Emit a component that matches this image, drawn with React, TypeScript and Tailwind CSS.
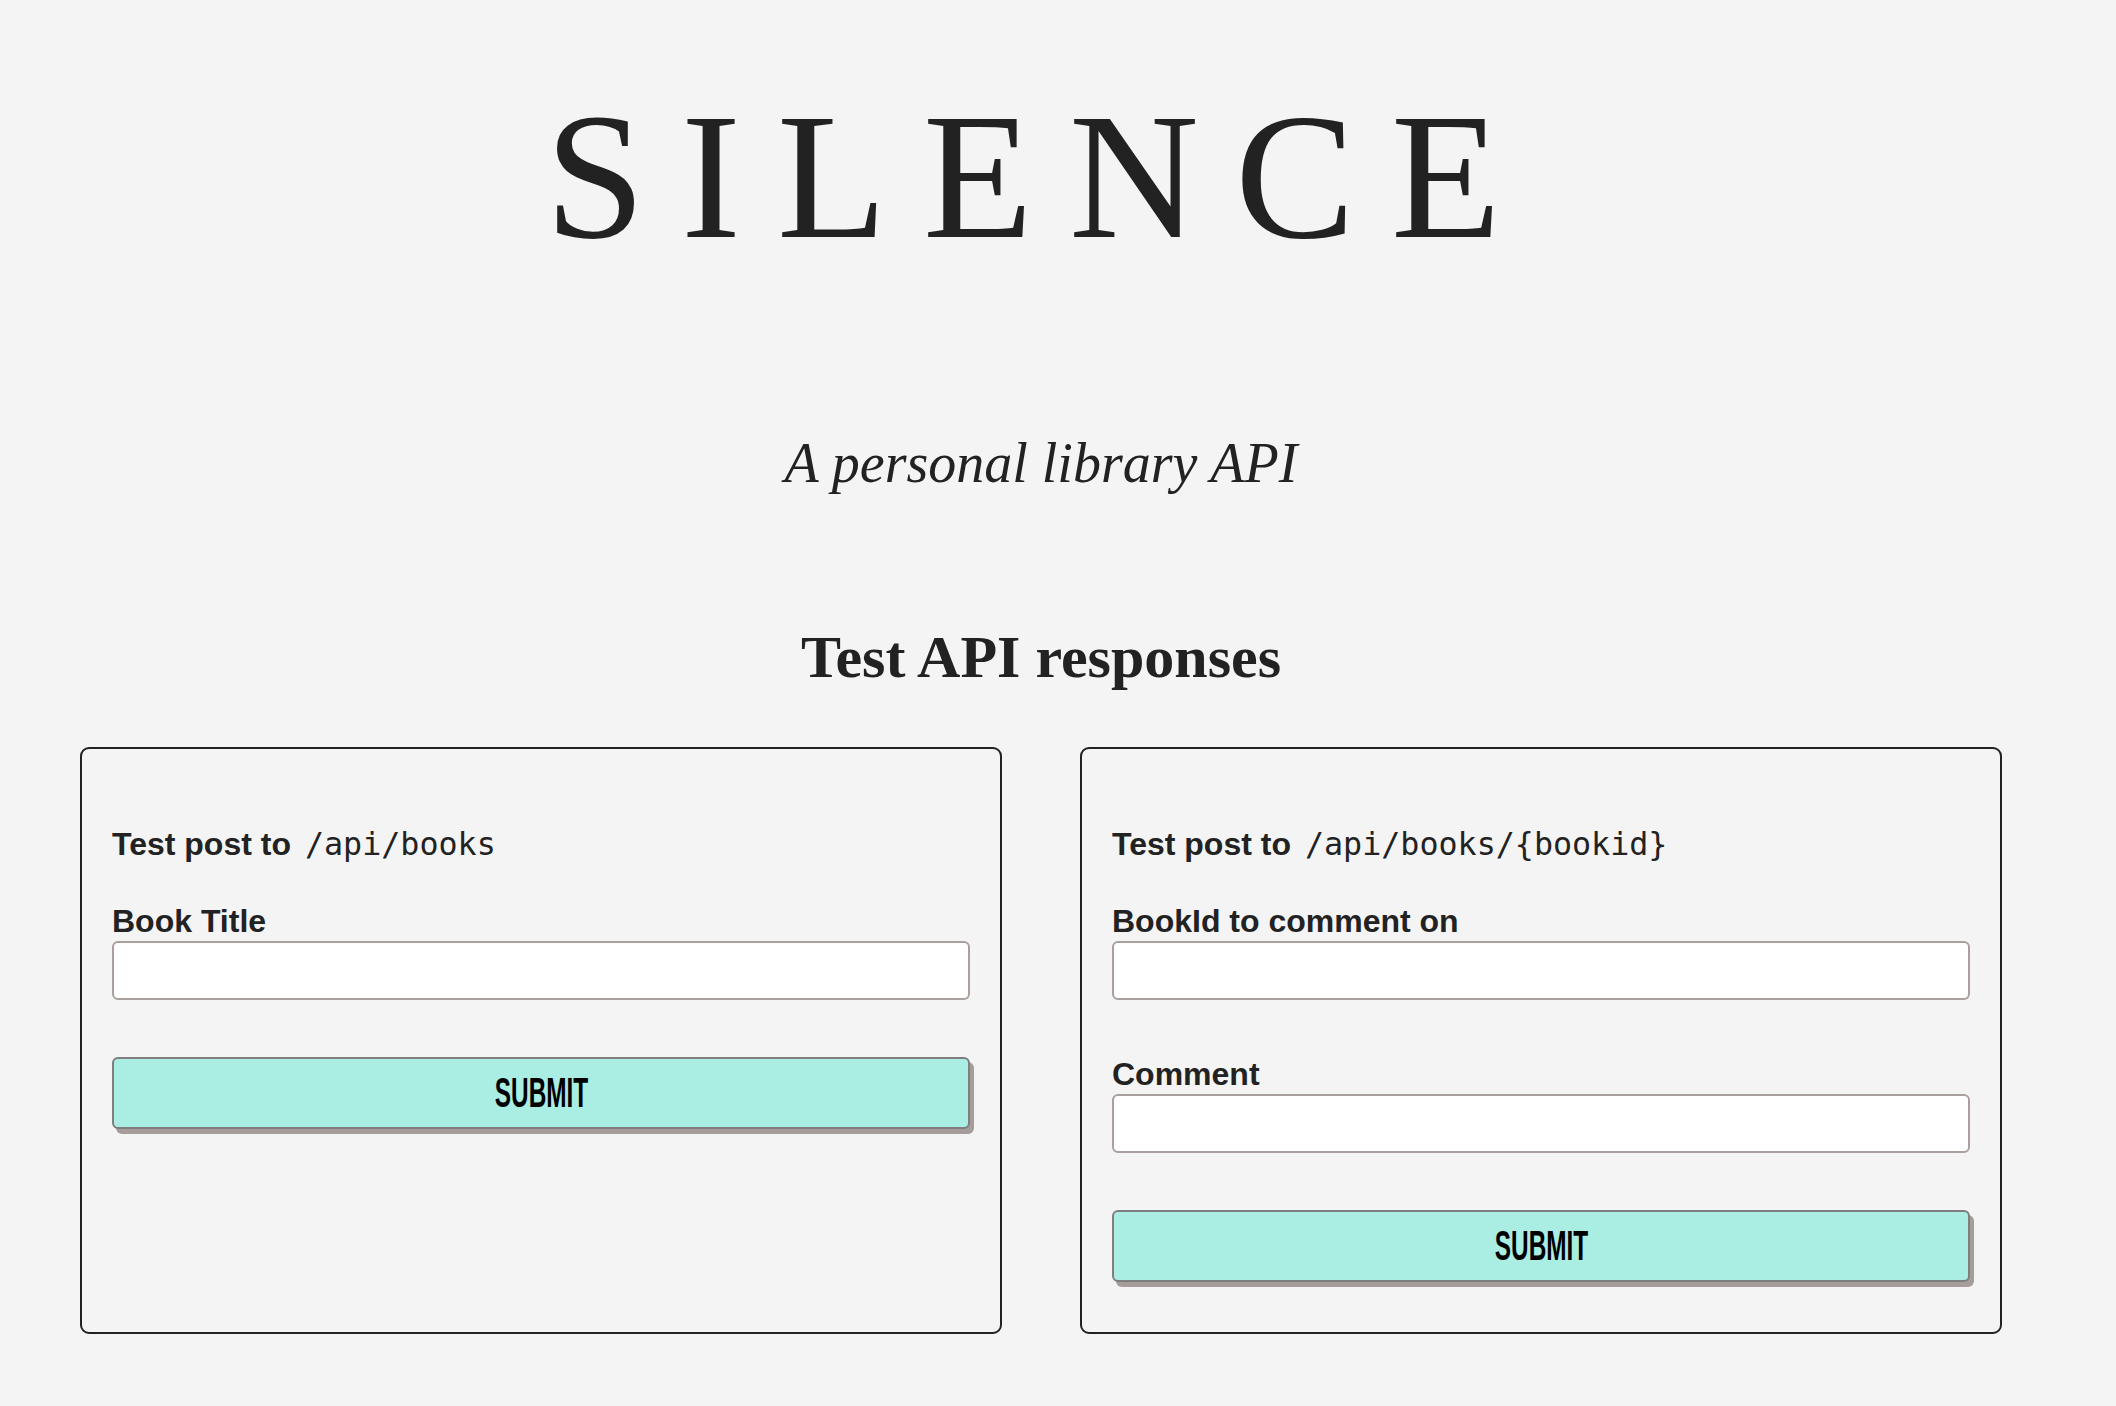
import React from 'react';

type Field = { label: string };

const Card: React.FC<{ path: string; fields: Field[] }> = ({ path, fields }) => {
  return (
    <div className="border-2 border-[#222] rounded-[9px] px-[30px] pt-[75px] pb-[50px] flex flex-col">
      <div className="flex items-baseline gap-[14px] h-[40px]">
        <span className="font-['Liberation_Sans',Arial,sans-serif] font-bold text-[32px] leading-[40px] text-[#222]">
          Test post to
        </span>
        <code className="font-['DejaVu_Sans_Mono',monospace] text-[31.7px] leading-[40px] text-[#222]">{path}</code>
      </div>

      {fields.map((f, i) => (
        <div key={f.label} className={i === 0 ? 'mt-[37px]' : 'mt-[54px]'}>
          <label className="block font-['Liberation_Sans',Arial,sans-serif] font-bold text-[32px] leading-[40px] text-[#222]">
            {f.label}
          </label>
          <input
            type="text"
            className="block w-full h-[59px] bg-white border-2 border-[#a9a09e] rounded-[6px] px-3 outline-none"
          />
        </div>
      ))}

      <button className="mt-[57px] h-[72px] w-full bg-[#aaede2] border-2 border-[#7e7e7e] rounded-[6px] shadow-[4px_5px_0_#a69d9b] flex items-center justify-center">
        <span className="inline-block font-['Liberation_Sans',Arial,sans-serif] font-bold text-[42px] leading-none text-black scale-x-[0.58]">
          SUBMIT
        </span>
      </button>
    </div>
  );
};

export default function App() {
  return (
    <div className="min-h-screen bg-[#f4f4f4] pl-[80px] pr-[114px] pb-[70px] text-[#222]">
      <h1 className="mt-0 pt-[87px] text-center font-['Liberation_Serif',serif] font-normal text-[180px] leading-none tracking-[36px] text-[#222]">
        SILENCE
      </h1>

      <p className="mt-[168px] text-center font-['Liberation_Serif',serif] italic text-[56px] leading-none text-[#222]">
        A personal library API
      </p>

      <h2 className="mt-[136px] text-center font-['Liberation_Serif',serif] font-bold text-[60px] leading-none text-[#222]">
        Test API responses
      </h2>

      <div className="mt-[60px] grid grid-cols-2 gap-[78px] items-stretch">
        <Card path="/api/books" fields={[{ label: 'Book Title' }]} />
        <Card
          path="/api/books/{bookid}"
          fields={[{ label: 'BookId to comment on' }, { label: 'Comment' }]}
        />
      </div>
    </div>
  );
}
